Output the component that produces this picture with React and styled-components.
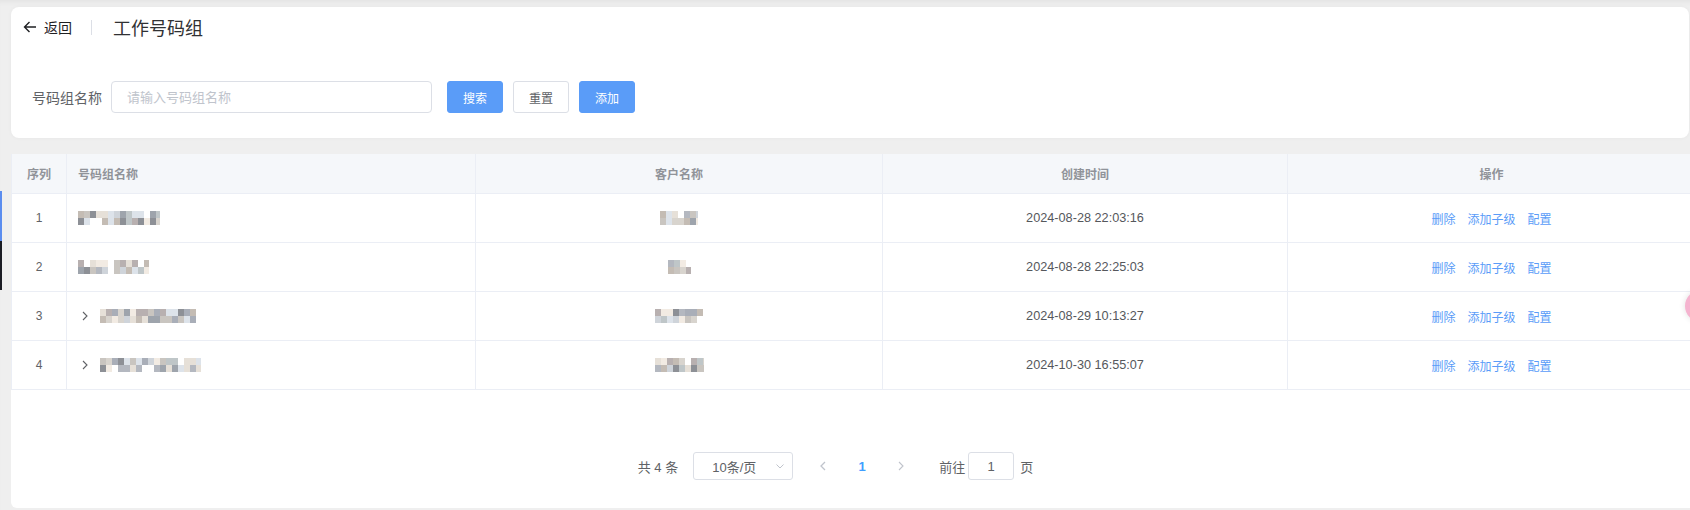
import React from 'react';
import styled, { createGlobalStyle } from 'styled-components';

const Global = createGlobalStyle`
  html, body { margin: 0; padding: 0; overflow: hidden; background: #efefef; }
  body { font-family: "Liberation Sans", "Noto Sans CJK SC", sans-serif; color: #606266; }
  * { box-sizing: border-box; }
`;

const Page = styled.div`
  width: 1700px;
  height: 510px;
  background: #efefef;
  padding: 7px 0 0 11px;
  box-shadow: inset 0 5px 5px -3px rgba(0, 0, 0, 0.05);
  display: flex;
  flex-direction: column;
  gap: 16px;
`;

const TopCard = styled.section`
  width: 1678px;
  height: 131px;
  background: #fff;
  border-radius: 8px;
  box-shadow: 0 0 4px rgba(0, 0, 0, 0.04);
  padding: 8px 12px 0 12px;
  display: flex;
  flex-direction: column;
  gap: 42px;
`;

const TitleBar = styled.div`
  display: flex;
  align-items: center;
  height: 24px;
`;

const Back = styled.div`
  display: flex;
  align-items: center;
  gap: 7px;
  font-size: 14px;
  color: #1f2023;
  svg { display: block; }
`;

const VDivider = styled.span`
  width: 1px;
  height: 15px;
  background: #dcdfe6;
  margin: 0 21px 0 19px;
`;

const Title = styled.h1`
  margin: 0;
  font-size: 18px;
  font-weight: 400;
  color: #303133;
`;

const SearchRow = styled.form`
  display: flex;
  align-items: center;
  padding-left: 9px;
  height: 32px;
  margin: 0;
`;

const Label = styled.label`
  font-size: 14px;
  color: #606266;
  margin-right: 9px;
`;

const Input = styled.input`
  width: 321px;
  height: 32px;
  border: 1px solid #dcdfe6;
  border-radius: 4px;
  padding: 0 15px;
  font-size: 13px;
  font-family: inherit;
  color: #606266;
  outline: none;
  &::placeholder { color: #c0c4cc; }
`;

const Buttons = styled.div`
  display: flex;
  gap: 10px;
  margin-left: 15px;
`;

const Button = styled.button`
  width: 56px;
  height: 32px;
  border-radius: 3px;
  font-size: 12px;
  font-family: inherit;
  padding: 0;
  cursor: pointer;
  border: 1px solid ${p => (p.$primary ? '#5a9cf8' : '#dcdfe6')};
  background: ${p => (p.$primary ? '#5a9cf8' : '#fff')};
  color: ${p => (p.$primary ? '#fff' : '#606266')};
`;

const TableCard = styled.section`
  width: 1685px;
  height: 354px;
  background: #fff;
  border-radius: 0 0 6px 6px;
  display: flex;
  flex-direction: column;
`;

const Grid = styled.div`
  display: grid;
  grid-template-columns: 55px 409px 407px 405px 408px;
  border-left: 1px solid #ebeef5;
`;

const HeadCell = styled.div`
  height: 40px;
  background: #f5f7fa;
  border-right: 1px solid #ebeef5;
  border-bottom: 1px solid #ebeef5;
  display: flex;
  align-items: center;
  justify-content: ${p => (p.$left ? 'flex-start' : 'center')};
  padding: 0 11px;
  font-size: 12px;
  font-weight: 700;
  color: #909399;
`;

const Cell = styled.div`
  height: 49px;
  border-right: 1px solid #ebeef5;
  border-bottom: 1px solid #ebeef5;
  display: flex;
  align-items: center;
  justify-content: ${p => (p.$left ? 'flex-start' : 'center')};
  padding: 0 11px;
  font-size: 12px;
  color: #606266;
`;

const DateText = styled.span`
  font-size: 12.7px;
  color: #55575c;
`;

const Expand = styled.span`
  width: 14px;
  margin-right: 8px;
  display: flex;
  justify-content: center;
  svg { display: block; }
`;

const Actions = styled.div`
  display: flex;
  gap: 12px;
`;

const Link = styled.a`
  color: #5a9cf8;
  font-size: 12px;
  cursor: pointer;
`;

const Pager = styled.div`
  display: flex;
  align-items: center;
  justify-content: center;
  padding: 62px 36px 0 0;
  font-size: 13px;
  color: #606266;
`;

const Total = styled.span`
  margin-right: 15px;
  white-space: pre;
`;

const Select = styled.div`
  width: 100px;
  height: 28px;
  border: 1px solid #dcdfe6;
  border-radius: 3px;
  display: flex;
  align-items: center;
  justify-content: space-between;
  padding: 0 7px 0 18px;
  font-size: 13px;
  color: #606266;
  margin-right: 12px;
  svg { display: block; }
`;

const PageBtn = styled.span`
  width: 36px;
  height: 28px;
  display: flex;
  align-items: center;
  justify-content: center;
  font-size: 13px;
  font-weight: ${p => (p.$active ? 700 : 400)};
  color: ${p => (p.$active ? '#409eff' : '#c0c4cc')};
  svg { display: block; }
`;

const Pages = styled.div`
  display: flex;
  gap: 3px;
`;

const Jumper = styled.div`
  display: flex;
  align-items: center;
  margin-left: 20px;
  gap: 3px;
`;

const JumpInput = styled.div`
  width: 46px;
  height: 28px;
  border: 1px solid #dcdfe6;
  border-radius: 3px;
  display: flex;
  align-items: center;
  justify-content: center;
  font-size: 13px;
  margin: 0 3px 0 0;
`;

const SideEdge = styled.div`
  position: fixed;
  left: 0;
  top: 191px;
  width: 2px;
  height: 99px;
  background: linear-gradient(#5b8def 0, #5b8def 50px, #1b1d24 50px, #1b1d24 100%);
`;

const Floater = styled.div`
  position: fixed;
  left: 1685px;
  top: 290px;
  width: 32px;
  height: 32px;
  border-radius: 50%;
  background: #f5b3cf;
  box-shadow: 0 0 6px rgba(0, 0, 0, 0.12);
`;

function rng(seed) {
  let s = seed;
  return () => {
    s = (s * 9301 + 49297) % 233280;
    return s / 233280;
  };
}

const palette = ['#a9aeb8', '#c9c5c0', '#d8d4ce', '#b8b0b0', '#e6e0d8', '#9ea4ac', '#cfd4da', '#bfc6c8', '#f2ebe3', '#8d9096', '#dde3ea', '#c4bcb4', '#b4b8c0'];

function Mosaic({ seed, width }) {
  const r = rng(seed);
  const bw = 6;
  const cols = Math.ceil(width / bw);
  const rects = [];
  for (let row = 0; row < 2; row++) {
    for (let c = 0; c < cols; c++) {
      const v = r();
      if (v < 0.08) continue;
      const color = palette[Math.floor(r() * palette.length)];
      rects.push(<rect key={row + '-' + c} x={c * bw} y={row * 7} width={bw} height={7} fill={color} />);
    }
  }
  return (
    <svg width={width} height={14} shapeRendering="crispEdges" aria-hidden="true">
      {rects}
    </svg>
  );
}

const BackIcon = () => (
  <svg width="14" height="14" viewBox="0 0 14 14" fill="none" stroke="#1f2023" strokeWidth="1.4">
    <path d="M13 7H1.5M6.5 2L1.5 7l5 5" />
  </svg>
);

const ChevronRight = ({ color = '#606266', size = 10 }) => (
  <svg width={size} height={size} viewBox="0 0 10 10" fill="none" stroke={color} strokeWidth="1.1">
    <path d="M3 1l4 4-4 4" />
  </svg>
);

const ChevronLeft = ({ color = '#c0c4cc' }) => (
  <svg width="10" height="10" viewBox="0 0 10 10" fill="none" stroke={color} strokeWidth="1.3">
    <path d="M7 1L3 5l4 4" />
  </svg>
);

const ChevronDown = () => (
  <svg width="10" height="10" viewBox="0 0 10 10" fill="none" stroke="#c0c4cc" strokeWidth="1">
    <path d="M1.5 3.5L5 7l3.5-3.5" />
  </svg>
);

const rows = [
  { id: 1, name: 82, nameSeed: 11, cust: 38, custSeed: 5, time: '2024-08-28 22:03:16' },
  { id: 2, name: 71, nameSeed: 27, cust: 23, custSeed: 41, time: '2024-08-28 22:25:03' },
  { id: 3, name: 96, nameSeed: 63, cust: 48, custSeed: 88, time: '2024-08-29 10:13:27', tree: true },
  { id: 4, name: 101, nameSeed: 95, cust: 49, custSeed: 130, time: '2024-10-30 16:55:07', tree: true },
];

export default function App() {
  return (
    <>
      <Global />
      <SideEdge />
      <Floater />
      <Page>
        <TopCard>
          <TitleBar>
            <Back>
              <BackIcon />
              <span>返回</span>
            </Back>
            <VDivider />
            <Title>工作号码组</Title>
          </TitleBar>
          <SearchRow onSubmit={e => e.preventDefault()}>
            <Label>号码组名称</Label>
            <Input placeholder="请输入号码组名称" />
            <Buttons>
              <Button type="button" $primary>搜索</Button>
              <Button type="button">重置</Button>
              <Button type="button" $primary>添加</Button>
            </Buttons>
          </SearchRow>
        </TopCard>
        <TableCard>
          <Grid>
            <HeadCell>序列</HeadCell>
            <HeadCell $left>号码组名称</HeadCell>
            <HeadCell>客户名称</HeadCell>
            <HeadCell>创建时间</HeadCell>
            <HeadCell>操作</HeadCell>
            {rows.map(r => (
              <React.Fragment key={r.id}>
                <Cell>{r.id}</Cell>
                <Cell $left>
                  {r.tree && (
                    <Expand>
                      <ChevronRight />
                    </Expand>
                  )}
                  <Mosaic seed={r.nameSeed} width={r.name} />
                </Cell>
                <Cell>
                  <Mosaic seed={r.custSeed} width={r.cust} />
                </Cell>
                <Cell>
                  <DateText>{r.time}</DateText>
                </Cell>
                <Cell>
                  <Actions>
                    <Link>删除</Link>
                    <Link>添加子级</Link>
                    <Link>配置</Link>
                  </Actions>
                </Cell>
              </React.Fragment>
            ))}
          </Grid>
          <Pager>
            <Total>共 4 条</Total>
            <Select>
              <span>10条/页</span>
              <ChevronDown />
            </Select>
            <Pages>
              <PageBtn><ChevronLeft /></PageBtn>
              <PageBtn $active>1</PageBtn>
              <PageBtn><ChevronRight color="#c0c4cc" /></PageBtn>
            </Pages>
            <Jumper>
              <span>前往</span>
              <JumpInput>1</JumpInput>
              <span>页</span>
            </Jumper>
          </Pager>
        </TableCard>
      </Page>
    </>
  );
}
